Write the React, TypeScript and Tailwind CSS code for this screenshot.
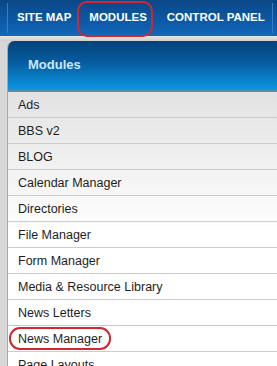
import React from "react";

const items = [
  "Ads",
  "BBS v2",
  "BLOG",
  "Calendar Manager",
  "Directories",
  "File Manager",
  "Form Manager",
  "Media & Resource Library",
  "News Letters",
  "News Manager",
  "Page Layouts",
];

export default function App() {
  return (
    <div
      className="relative w-[277px] h-[366px] overflow-hidden bg-[#d7d7d7]"
      style={{ fontFamily: '"Liberation Sans", Arial, sans-serif' }}
    >
      <nav className="h-[36px] flex items-center bg-[linear-gradient(to_bottom,#0a4785,#0c5aa8_60%,#1268b8)] text-white font-bold text-[11.5px]">
        <div className="ml-[7px] w-px h-[30px] bg-[#3c7cc0]" />
        <span className="ml-[9px]">SITE MAP</span>
        <span className="ml-[18px]">MODULES</span>
        <span className="ml-[20px]">CONTROL PANEL</span>
        <div className="ml-auto mr-[4px] w-px h-[30px] bg-[#3c7cc0]" />
      </nav>
      <div className="h-[5px] bg-[linear-gradient(to_bottom,#e6e6e6,#cfcfcf)]" />
      <div className="ml-[7px] border-l border-[#a9a9a9] rounded-tl-[7px] overflow-hidden">
        <div className="h-[51px] flex items-center pl-[20px] pb-[2px] bg-[linear-gradient(to_bottom,#03427a,#065da0_45%,#0a97e2)] border-b-2 border-[#5b8ba6] text-[#cfe6fb] font-bold text-[13px]">
          Modules
        </div>
        <ul className="bg-[linear-gradient(to_bottom,#e2e2e2,#ffffff_140px)]">
          {items.map((t) => (
            <li
              key={t}
              className="h-[26px] flex items-center pl-[10px] pt-[1px] border-b border-[#cccccc] text-[12.5px] text-[#1e1e1e]"
            >
              {t}
            </li>
          ))}
        </ul>
      </div>
      <div className="absolute left-[77px] top-[1px] w-[76px] h-[36px] border-2 border-[#d22630] rounded-[10px]" />
      <div className="absolute left-[9px] top-[327px] w-[102px] h-[23px] border-2 border-[#d22630] rounded-[11px]" />
    </div>
  );
}
